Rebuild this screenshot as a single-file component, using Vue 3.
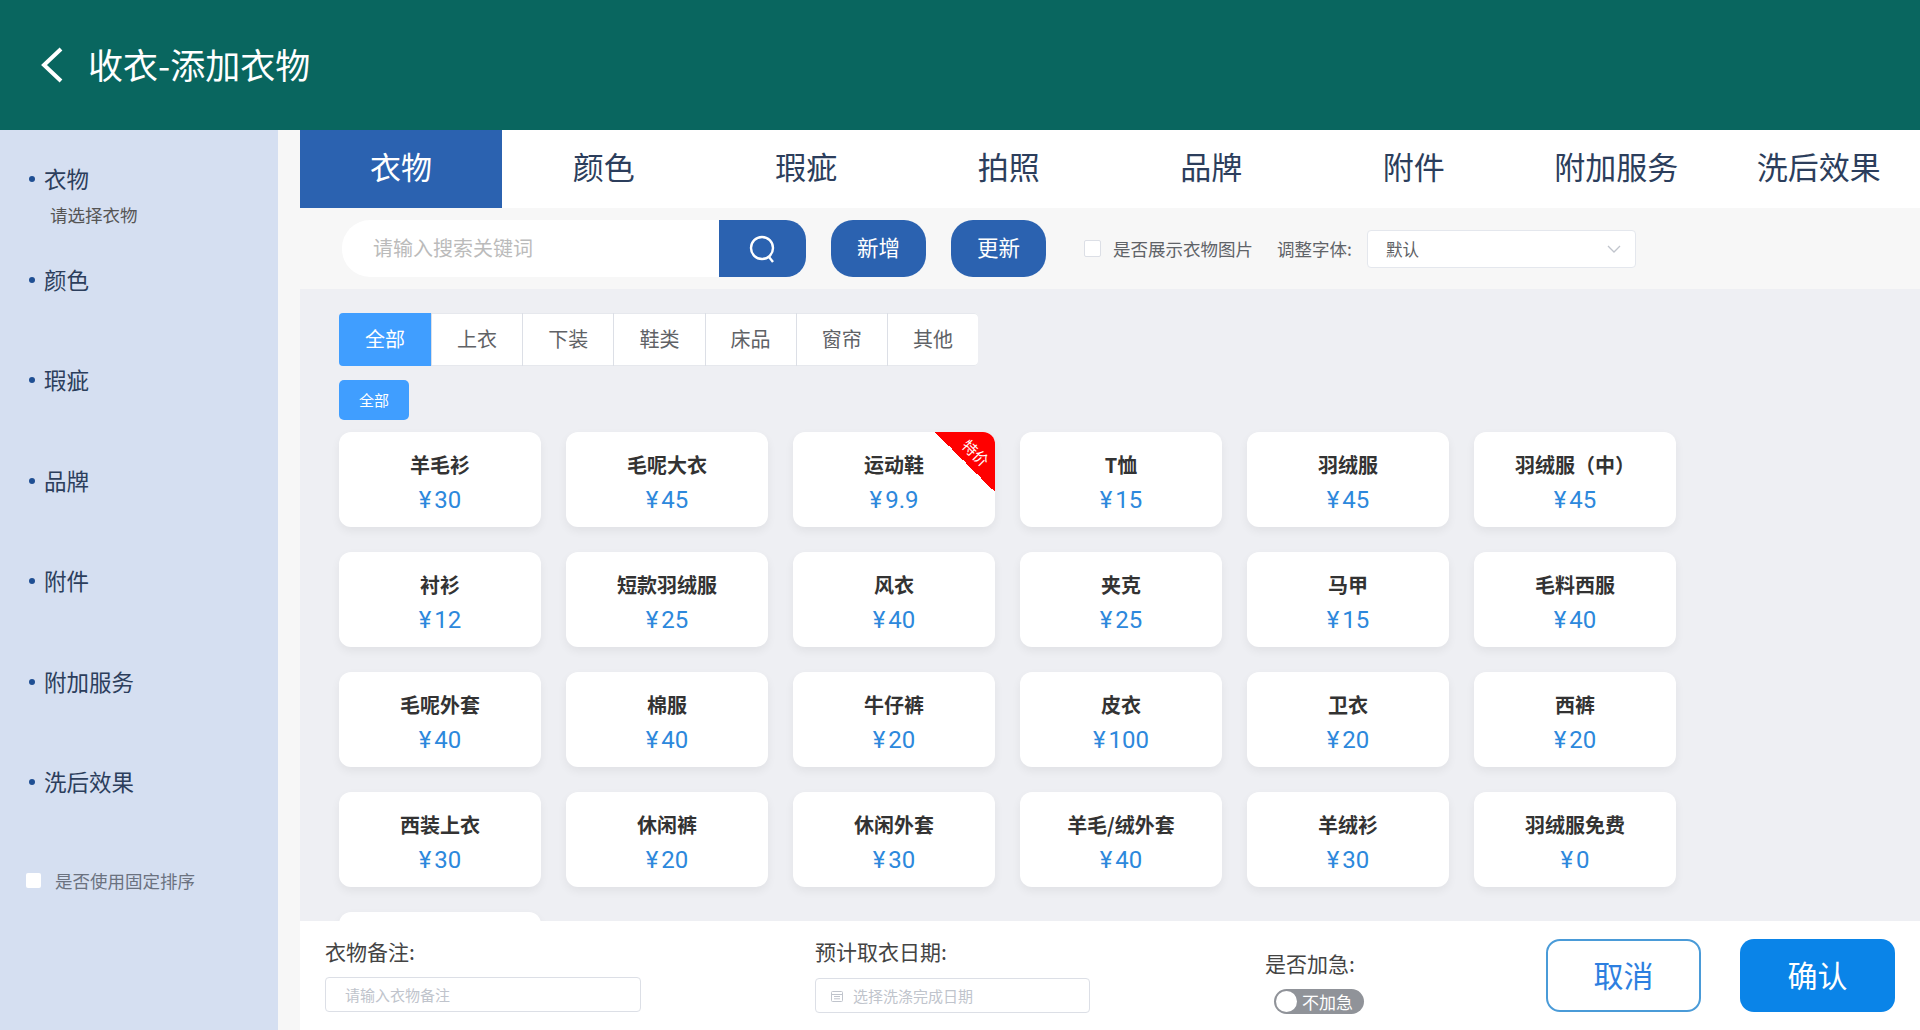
<script setup>
const tabs = ['衣物', '颜色', '瑕疵', '拍照', '品牌', '附件', '附加服务', '洗后效果']
const side = ['颜色', '瑕疵', '品牌', '附件', '附加服务', '洗后效果']
const cats = ['全部', '上衣', '下装', '鞋类', '床品', '窗帘', '其他']
const items = [
  ['羊毛衫', 30], ['毛呢大衣', 45], ['运动鞋', 9.9], ['T恤', 15], ['羽绒服', 45], ['羽绒服（中）', 45],
  ['衬衫', 12], ['短款羽绒服', 25], ['风衣', 40], ['夹克', 25], ['马甲', 15], ['毛料西服', 40],
  ['毛呢外套', 40], ['棉服', 40], ['牛仔裤', 20], ['皮衣', 100], ['卫衣', 20], ['西裤', 20],
  ['西装上衣', 30], ['休闲裤', 20], ['休闲外套', 30], ['羊毛/绒外套', 40], ['羊绒衫', 30], ['羽绒服免费', 0],
  ['', '']
]
</script>

<template>
  <div class="page">
    <header class="head">
      <svg class="back" width="26" height="36" viewBox="0 0 26 36"><path d="M22 2 L5 18 L22 34" fill="none" stroke="#fff" stroke-width="4"/></svg>
      <h1>收衣-添加衣物</h1>
    </header>
    <div class="body">
      <aside class="side">
        <div class="sitem first"><i></i>衣物</div>
        <div class="ssub">请选择衣物</div>
        <div v-for="s in side" :key="s" class="sitem"><i></i>{{ s }}</div>
        <label class="fixed"><span class="sbox"></span>是否使用固定排序</label>
      </aside>
      <main class="main">
        <nav class="tabs">
          <div v-for="(t, i) in tabs" :key="t" class="tab" :class="{ on: i === 0 }">{{ t }}</div>
        </nav>
        <div class="tools">
          <div class="search">
            <span class="ph">请输入搜索关键词</span>
            <button class="sbtn">
              <svg width="32" height="32" viewBox="0 0 32 32"><circle cx="15" cy="15" r="11" fill="none" stroke="#fff" stroke-width="2.4"/><path d="M22 24 L26 29" stroke="#fff" stroke-width="2.4" fill="none"/></svg>
            </button>
          </div>
          <button class="pill add">新增</button>
          <button class="pill">更新</button>
          <span class="cbox"></span>
          <span class="tlabel c1">是否展示衣物图片</span>
          <span class="tlabel c2">调整字体:</span>
          <div class="select">
            <span>默认</span>
            <svg width="14" height="10" viewBox="0 0 14 10"><path d="M1 2 L7 8 L13 2" fill="none" stroke="#c0c4cc" stroke-width="1.3"/></svg>
          </div>
        </div>
        <section class="panel">
          <div class="cats">
            <div v-for="(c, i) in cats" :key="c" class="cat" :class="{ on: i === 0 }">{{ c }}</div>
          </div>
          <div class="subtag">全部</div>
          <div class="grid">
            <div v-for="(it, i) in items" :key="i" class="card">
              <div class="name">{{ it[0] }}</div>
              <div v-if="it[0]" class="price"><em>¥</em>{{ it[1] }}</div>
              <div v-if="it[0] === '运动鞋'" class="ribbon"><span>特价</span></div>
            </div>
          </div>
        </section>
        <footer class="foot">
          <div class="fcol note">
            <div class="flabel">衣物备注:</div>
            <div class="finput w1">请输入衣物备注</div>
          </div>
          <div class="fcol date">
            <div class="flabel">预计取衣日期:</div>
            <div class="finput w2">
              <svg width="14" height="14" viewBox="0 0 14 14"><rect x="1.5" y="2.5" width="11" height="10" rx="1" fill="none" stroke="#c0c4cc"/><path d="M1.5 5.5 H12.5 M4 7.5 H10 M4 9.8 H10" stroke="#c0c4cc"/></svg>
              选择洗涤完成日期
            </div>
          </div>
          <div class="fcol urgent">
            <div class="flabel">是否加急:</div>
            <div class="toggle"><span class="knob"></span>不加急</div>
          </div>
          <button class="fbtn cancel">取消</button>
          <button class="fbtn ok">确认</button>
        </footer>
      </main>
    </div>
  </div>
</template>

<style>
html, body { margin: 0; padding: 0; background: #f7f7f7; overflow: hidden; }
</style>

<style scoped>
.page { width: 1920px; height: 1030px; display: flex; flex-direction: column; overflow: hidden; font-family: "Noto Sans CJK SC", "Noto Sans", sans-serif; color: #303133; }
.head { height: 130px; flex: none; background: #09665f; display: flex; align-items: center; padding-left: 39px; box-sizing: border-box; }
.back { margin-right: 23px; }
.head h1 { margin: 0 0 4px; font-size: 35px; font-weight: 400; color: #fff; line-height: 1; }
.body { flex: 1; display: flex; min-height: 0; background: #f7f7f7; }
.side { width: 278px; flex: none; background: #d5dff1; padding: 30px 0 0 29px; box-sizing: border-box; display: flex; flex-direction: column; }
.sitem { display: flex; align-items: center; height: 36px; font-size: 22.5px; color: #2c3e5c; margin-bottom: 64.4px; }
.sitem i { width: 6px; height: 6px; border-radius: 50%; background: #1f4f93; margin-right: 9px; margin-top: 2px; }
.sitem.first { margin-bottom: 7px; }
.ssub { font-size: 17.5px; color: #555; margin: 0 0 34px 21px; line-height: 24px; height: 24px; }
.fixed { display: flex; align-items: center; font-size: 17.5px; color: #6b7280; margin: 5px 0 0 -3px; height: 24px; }
.sbox { width: 15px; height: 15px; background: #fff; border-radius: 2px; margin-right: 14px; }
.main { width: 1620px; margin-left: 22px; flex: none; display: flex; flex-direction: column; min-width: 0; }
.tabs { display: flex; height: 78px; flex: none; background: #fff; }
.tab { width: 202.5px; flex: none; display: flex; align-items: center; justify-content: center; font-size: 31px; color: #2c3e5c; padding-bottom: 7px; box-sizing: border-box; }
.tab.on { background: #2b62b0; color: #fff; width: 202px; margin-right: .5px; }
.tools { height: 81px; flex: none; background: #f7f7f7; display: flex; align-items: center; box-sizing: border-box; margin-left: -22px; padding-left: 64px; }
.search { width: 464px; height: 57px; display: flex; background: #fff; border-radius: 28px 20px 20px 28px; overflow: hidden; margin-right: 25px; flex: none; }
.ph { flex: 1; font-size: 20px; color: #bbb; line-height: 55px; padding-left: 31px; }
.sbtn { width: 87px; border: 0; background: #2b62b0; display: flex; align-items: center; justify-content: center; padding: 0; }
.pill { width: 95px; height: 57px; border: 0; border-radius: 22px; background: #2b62b0; color: #fff; font-size: 21.5px; font-family: inherit; flex: none; padding: 0 0 4px; }
.add { margin-right: 25px; }
.cbox { width: 15px; height: 15px; border: 1px solid #dcdfe6; background: #fff; border-radius: 2px; margin-left: 38px; margin-right: 12px; flex: none; }
.tlabel { font-size: 17.5px; color: #5f6368; white-space: nowrap; }
.c2 { margin-left: 24px; }
.select { width: 269px; height: 38px; margin-left: 15px; background: #fff; border: 1px solid #e4e7ed; border-radius: 4px; box-sizing: border-box; display: flex; align-items: center; justify-content: space-between; padding: 0 14px 0 18px; font-size: 16.5px; color: #606266; }
.panel { flex: 1; min-height: 0; background: #eeeff3; padding: 24px 0 0 39px; overflow: hidden; box-sizing: border-box; }
.cats { display: flex; width: 639px; height: 53px; background: #fff; box-shadow: inset 0 -1px 0 #e6e8ed, inset 0 1px 0 #e6e8ed; border-radius: 4px; overflow: hidden; }
.cat { flex: 1 1 0; display: flex; align-items: center; justify-content: center; font-size: 20px; color: #606266; border-left: 1px solid #dcdfe6; padding-bottom: 2px; }
.cat.on { background: #409eff; color: #fff; border-left: 0; flex: 0 0 92px; }
.subtag { width: 70px; height: 40px; margin: 14px 0 12px; background: #409eff; color: #fff; border-radius: 5px; font-size: 15px; display: flex; align-items: center; justify-content: center; padding-bottom: 2px; box-sizing: border-box; }
.grid { display: grid; grid-template-columns: repeat(6, 202px); column-gap: 25px; row-gap: 25px; }
.card { position: relative; height: 95px; background: #fff; border-radius: 12px; box-shadow: 0 4px 10px rgba(0, 0, 0, .06); text-align: center; overflow: hidden; padding-top: 18px; box-sizing: border-box; }
.name { font-size: 20px; font-weight: 700; color: #333; line-height: 30px; height: 30px; }
.price { font-family: Roboto, "Liberation Sans", sans-serif; font-size: 24px; color: #2d88dc; line-height: 38px; margin-top: 1px; }
.price em { font-style: normal; margin-right: 3px; }
.ribbon { position: absolute; top: 0; right: 0; width: 60px; height: 60px; background: linear-gradient(to top right, transparent 50%, #f00 50%); }
.ribbon span { position: absolute; top: 10px; left: 26px; font-size: 15px; color: #fff; transform: rotate(45deg); white-space: nowrap; }
.foot { height: 109px; flex: none; background: #fff; position: relative; display: flex; align-items: flex-start; box-sizing: border-box; padding-left: 25px; }
.fcol { flex: none; }
.flabel { font-size: 21px; color: #444; line-height: 30px; }
.note { width: 490px; padding-top: 15px; }
.date { width: 450px; padding-top: 15px; }
.urgent { width: 281px; padding-top: 27px; }
.finput { height: 35px; margin-top: 11px; border: 1px solid #dcdfe6; border-radius: 4px; box-sizing: border-box; font-size: 15px; color: #c0c4cc; display: flex; align-items: center; gap: 9px; padding-left: 19px; }
.w1 { width: 316px; }
.w2 { width: 275px; padding-left: 14px; margin-top: 12px; }
.toggle { width: 90px; height: 25px; margin: 11px 0 0 9px; background: #909399; border-radius: 13px; color: #fff; font-size: 17px; display: flex; align-items: center; gap: 5px; padding-left: 2px; box-sizing: border-box; }
.knob { width: 21px; height: 21px; border-radius: 50%; background: #fff; flex: none; }
.fbtn { width: 155px; height: 73px; margin-top: 18px; border-radius: 14px; font-size: 30px; font-family: inherit; padding: 0 0 4px; flex: none; }
.cancel { background: #fff; border: 2px solid #4a9bd8; color: #2d7fe0; margin-right: 39px; }
.ok { background: #0a84e8; border: 0; color: #fff; }
</style>
